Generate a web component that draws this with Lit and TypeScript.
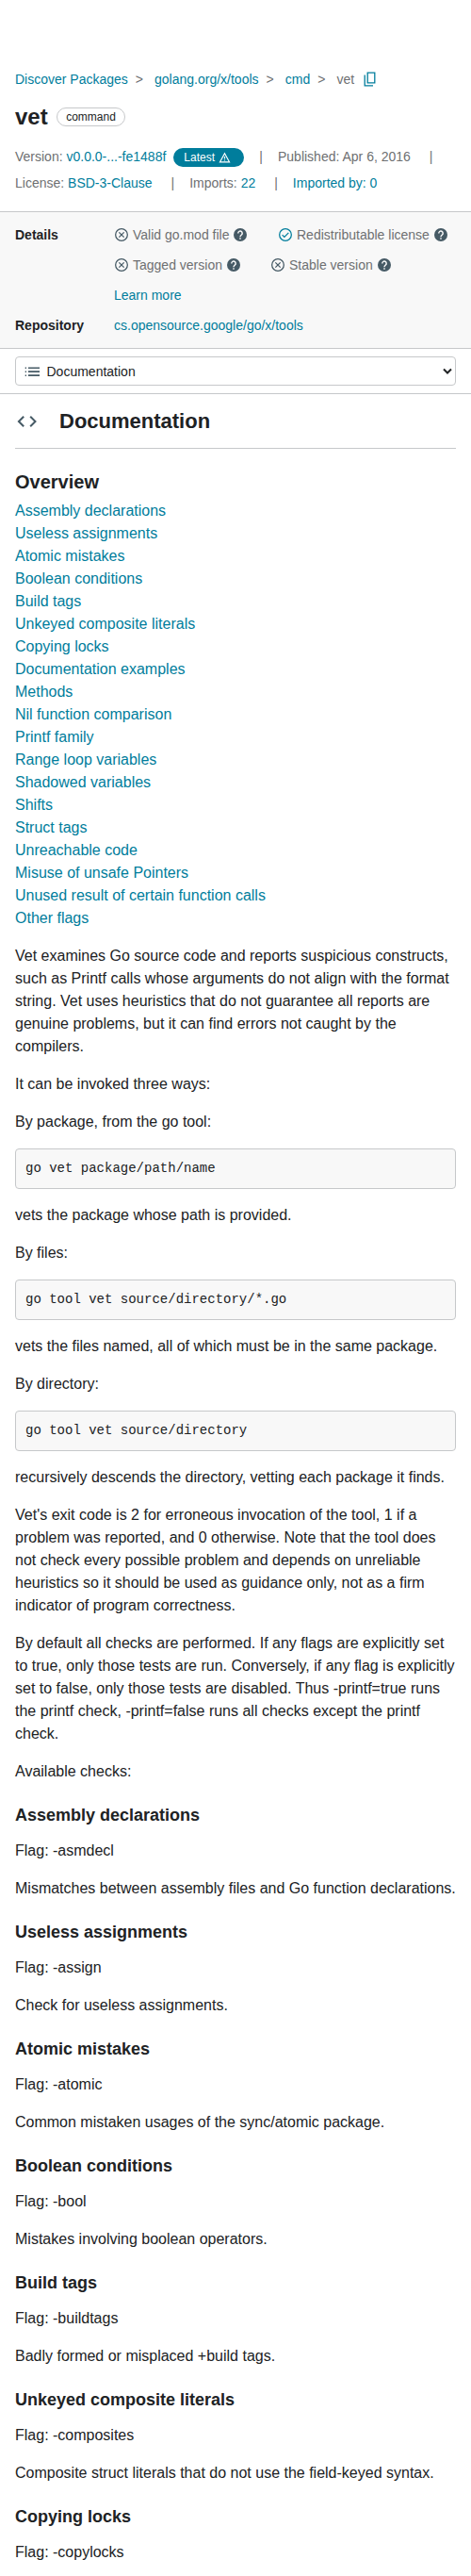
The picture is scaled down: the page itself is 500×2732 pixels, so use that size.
import { LitElement, html, css } from "lit";
import { customElement } from "lit/decorators.js";

const help = html`<svg class="ic help" viewBox="0 0 24 24"><circle cx="12" cy="12" r="10.500" fill="#465a65"/><path fill="none" stroke="#f8f8f8" stroke-width="2.200" d="M8.700 9.700a3.300 3.300 0 1 1 5.400 2.300c-1.200 1-2.100 1.500-2.100 3.300M12 16.700v2.300"/></svg>`;
const cross = html`<svg class="ic" viewBox="0 0 24 24" fill="none" stroke="#465a65" stroke-width="1.900"><circle cx="12" cy="12" r="9.500"/><path d="M8 8l8 8M16 8l-8 8"/></svg>`;
const tick = html`<svg class="ic" viewBox="0 0 24 24" fill="none" stroke="#007d9c" stroke-width="1.900"><circle cx="12" cy="12" r="9.500"/><path d="M7 12.200l3.300 3.300 6.700-6.700"/></svg>`;

const toc = [
  "Assembly declarations", "Useless assignments", "Atomic mistakes", "Boolean conditions",
  "Build tags", "Unkeyed composite literals", "Copying locks", "Documentation examples",
  "Methods", "Nil function comparison", "Printf family", "Range loop variables",
  "Shadowed variables", "Shifts", "Struct tags", "Unreachable code",
  "Misuse of unsafe Pointers", "Unused result of certain function calls", "Other flags",
];

const checks = [
  ["Assembly declarations", "asmdecl", "Mismatches between assembly files and Go function declarations."],
  ["Useless assignments", "assign", "Check for useless assignments."],
  ["Atomic mistakes", "atomic", "Common mistaken usages of the sync/atomic package."],
  ["Boolean conditions", "bool", "Mistakes involving boolean operators."],
  ["Build tags", "buildtags", "Badly formed or misplaced +build tags."],
  ["Unkeyed composite literals", "composites", "Composite struct literals that do not use the field-keyed syntax."],
  ["Copying locks", "copylocks", ""],
];

@customElement("app-root")
export class AppRoot extends LitElement {
  static styles = css`
    :host { display: block; height: 2732px; overflow: hidden; background: #fff; color: #202224;
      font: 16px/24px "Liberation Sans", Arial, sans-serif; }
    * { box-sizing: border-box; }
    a { color: #007d9c; text-decoration: none; }
    h1, h2, h3, h4, p, pre { margin: 0; }
    svg { display: block; flex: none; }
    .head { height: 224px; padding: 73px 16px 0; font-size: 14px; line-height: 22px; color: #6e7072; }
    .crumbs { display: flex; align-items: center; }
    .gt { margin: 0 12px 0 8px; }
    .copy { margin-left: 10px; }
    .title { display: flex; align-items: center; gap: 9px; margin-top: 14px; height: 30px; color: #202224; }
    h1 { font-size: 24px; line-height: 30px; }
    .chip { display: flex; align-items: center; height: 20px; padding: 0 9.500px; border: 1px solid #c6c8ca;
      border-radius: 10px; font-size: 12px; }
    .meta { display: flex; align-items: center; height: 28px; white-space: pre; }
    .meta.first { margin-top: 13px; }
    .bar { margin: 0 16px 0 20px; }
    .latest + .bar { margin-left: 16px; }
    .latest { display: flex; align-items: center; gap: 4px; width: 75px; height: 20px; padding-left: 11px; margin: 2px 0 0 8px;
      border-radius: 10px; background: #007d9c; color: #fff; font-size: 12px; }
    .details { display: grid; grid-template-columns: 105px 1fr; grid-auto-rows: 32px; align-items: center;
      height: 146px; padding: 8px 16px 0; border: solid #c6c8ca; border-width: 1px 0; background: #f8f8f8;
      font-size: 14px; line-height: 22px; color: #6e7072; }
    .details b { color: #202224; }
    .row, .item { display: flex; align-items: center; }
    .wide { width: 174px; }
    .narrow { width: 166px; }
    .ic { width: 16px; height: 16px; margin-right: 4px; }
    .help { margin: 0 0 0 4px; }
    .nav { height: 48px; padding: 8px 16px; border-bottom: 1px solid #c6c8ca; }
    .select { display: flex; align-items: center; height: 31px; border: 1px solid #c6c8ca; border-radius: 4px;
      padding: 0 3px 0 9px; font-size: 14px; color: #202224; }
    .select span { flex: 1; margin-left: 6.500px; }
    .doc { padding: 0 16px; }
    .dochead { display: flex; align-items: center; height: 58px; border-bottom: 1px solid #c6c8ca; }
    h2 { font-size: 22px; line-height: 28px; margin-left: 22px; }
    h3 { font-size: 20px; line-height: 25px; margin: 23px 0 6px; }
    .toc { display: flex; flex-direction: column; align-items: flex-start; }
    .text { display: flex; flex-direction: column; gap: 16px; margin-top: 16px; }
    pre { height: 43px; padding: 10px; border: 1px solid #c6c8ca; border-radius: 4px; background: #f8f8f8;
      font: 14px/21px "Liberation Mono", monospace; }
    h4 { font-size: 18px; line-height: 20px; margin-top: 8px; }
  `;

  render() {
    return html`
      <div class="head">
        <div class="crumbs">
          <a>Discover Packages</a><span class="gt">&gt;</span><a>golang.org/x/tools</a><span class="gt">&gt;</span><a>cmd</a><span class="gt">&gt;</span><span>vet</span>
          <svg class="copy" width="13" height="16" viewBox="0 0 13 16" fill="none" stroke="#007d9c" stroke-width="1.300"><path d="M4.200 1.200h7.600v10.600H4.200zM1.200 3.500v11.300h8.800"/></svg>
        </div>
        <div class="title"><h1>vet</h1><span class="chip">command</span></div>
        <div class="meta first">Version: <a>v0.0.0-...-fe1488f</a><span class="latest"><span>Latest</span><svg width="13" height="12" viewBox="0 0 13 12" fill="none" stroke="#fff" stroke-width="1.200"><path d="M6.500 1.800l5 9h-10zM6.500 5v2.600M6.500 8.400v1.200"/></svg></span><span class="bar">|</span>Published: Apr 6, 2016<span class="bar">|</span></div>
        <div class="meta">License: <a>BSD-3-Clause</a><span class="bar">|</span>Imports: <a>22</a><span class="bar">|</span><a>Imported by: 0</a></div>
      </div>
      <div class="details">
        <b>Details</b>
        <div class="row"><span class="item wide">${cross}Valid go.mod file${help}</span><span class="item">${tick}Redistributable license${help}</span></div>
        <span></span>
        <div class="row"><span class="item narrow">${cross}Tagged version${help}</span><span class="item">${cross}Stable version${help}</span></div>
        <span></span><a>Learn more</a>
        <b>Repository</b><a>cs.opensource.google/go/x/tools</a>
      </div>
      <div class="nav"><div class="select">
        <svg width="17" height="10" viewBox="0 0 17 10" fill="#465a65"><path d="M.7 .500H2V2H.7zM.7 4.500H2V6H.7zM.7 8.500H2V10H.7zM4 .500h12V2H4zM4 4.300h12v1.700H4zM4 8.300h12V10H4z"/></svg>
        <span>Documentation</span>
        <svg width="10" height="8" viewBox="0 0 10 8" fill="none" stroke="#202224" stroke-width="2"><path d="M1 1.500l4 4 4-4"/></svg>
      </div></div>
      <div class="doc">
        <div class="dochead">
          <svg width="25" height="14" viewBox="0 0 25 14" fill="none" stroke="#465a65" stroke-width="2"><path d="M9.200 1.700L3.900 7l5.300 5.300M16.200 1.700L21.500 7l-5.300 5.300"/></svg>
          <h2>Documentation</h2>
        </div>
        <h3>Overview</h3>
        <div class="toc">${toc.map((t) => html`<a>${t}</a>`)}</div>
        <div class="text">
          <p>Vet examines Go source code and reports suspicious constructs, such as Printf calls whose arguments do not align with the format string. Vet uses heuristics that do not guarantee all reports are genuine problems, but it can find errors not caught by the compilers.</p>
          <p>It can be invoked three ways:</p>
          <p>By package, from the go tool:</p>
          <pre>go vet package/path/name</pre>
          <p>vets the package whose path is provided.</p>
          <p>By files:</p>
          <pre>go tool vet source/directory/*.go</pre>
          <p>vets the files named, all of which must be in the same package.</p>
          <p>By directory:</p>
          <pre>go tool vet source/directory</pre>
          <p>recursively descends the directory, vetting each package it finds.</p>
          <p>Vet's exit code is 2 for erroneous invocation of the tool, 1 if a problem was reported, and 0 otherwise. Note that the tool does not check every possible problem and depends on unreliable heuristics so it should be used as guidance only, not as a firm indicator of program correctness.</p>
          <p>By default all checks are performed. If any flags are explicitly set to true, only those tests are run. Conversely, if any flag is explicitly set to false, only those tests are disabled. Thus -printf=true runs the printf check, -printf=false runs all checks except the printf check.</p>
          <p>Available checks:</p>
          ${checks.map(([t, f, d]) => html`<h4>${t}</h4><p>Flag: -${f}</p>${d ? html`<p>${d}</p>` : ""}`)}
        </div>
      </div>
    `;
  }
}
